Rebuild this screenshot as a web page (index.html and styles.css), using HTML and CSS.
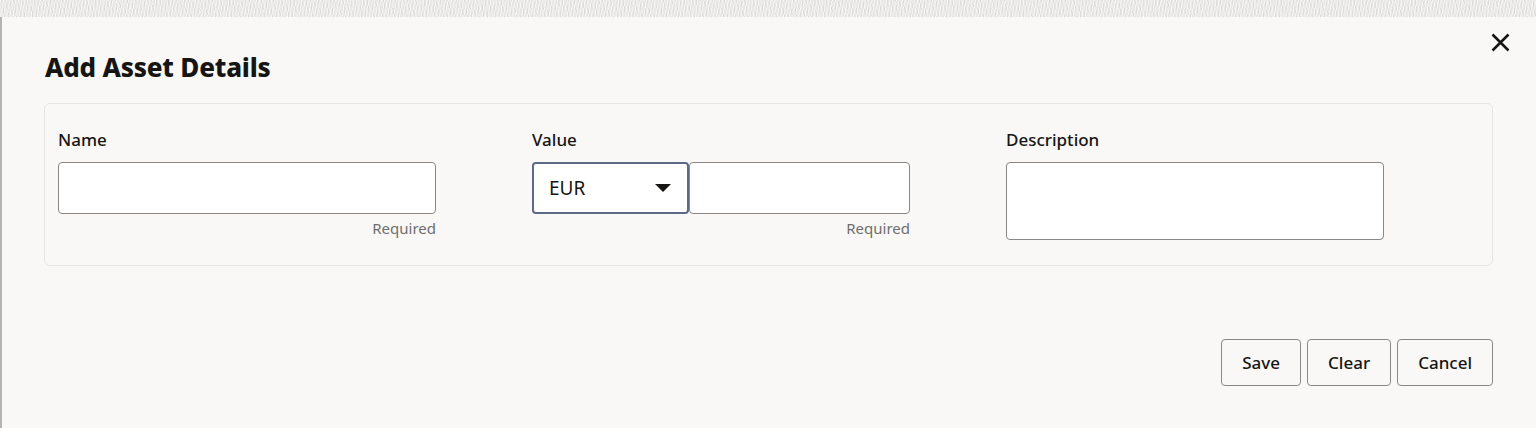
FILE: index.html
```html
<!DOCTYPE html>
<html lang="en">
<head>
<meta charset="utf-8">
<title>Add Asset Details</title>
<link rel="stylesheet" href="styles.css">
</head>
<body>
<div class="backdrop"></div>
<div class="dialog">
  <button class="close" aria-label="Close">
    <svg width="19" height="19" viewBox="0 0 19 19"><path d="M1.5 1.5 L17.5 17.5 M17.5 1.5 L1.5 17.5" stroke="#161513" stroke-width="2.5" fill="none"/></svg>
  </button>
  <h1 class="title">Add Asset Details</h1>
  <div class="card">
    <div class="field">
      <label class="label">Name</label>
      <div class="input name-input"></div>
      <div class="help">Required</div>
    </div>
    <div class="field">
      <label class="label">Value</label>
      <div class="combo">
        <div class="select"><span>EUR</span><svg class="caret" width="16" height="8" viewBox="0 0 16 8"><path d="M0 0 H16 L8 8 Z" fill="#161513"/></svg></div>
        <div class="input amount"></div>
      </div>
      <div class="help">Required</div>
    </div>
    <div class="field">
      <label class="label">Description</label>
      <div class="input textarea"></div>
    </div>
  </div>
  <div class="footer">
    <button class="btn">Save</button>
    <button class="btn">Clear</button>
    <button class="btn">Cancel</button>
  </div>
</div>
</body>
</html>
```
FILE: styles.css
```css
html, body {
  margin: 0;
  padding: 0;
  width: 1536px;
  height: 428px;
  overflow: hidden;
  background: #e6e5e3;
  font-family: "Noto Sans", "Open Sans", sans-serif;
  color: #161513;
}
.backdrop {
  height: 17px;
  background-color: #e9e8e6;
  background-image:
    repeating-linear-gradient(100deg, rgba(255,255,255,0.55) 0 1px, transparent 1px 3px),
    repeating-linear-gradient(80deg, rgba(200,200,200,0.35) 0 1px, transparent 1px 4px);
}
.dialog {
  position: relative;
  box-sizing: border-box;
  height: 411px;
  background: #f9f8f6;
  border-left: 2px solid #b5b4b2;
  padding: 0 43px 0 42px;
  display: flex;
  flex-direction: column;
}
.close {
  position: absolute;
  top: 15px;
  right: 25px;
  width: 21px;
  height: 21px;
  padding: 1px;
  border: 0;
  background: transparent;
  display: flex;
  align-items: center;
  justify-content: center;
}
.title {
  margin: 35px 0 0 1px;
  font-size: 26px;
  line-height: 30px;
  font-weight: 800;
  letter-spacing: -0.2px;
}
.card {
  margin-top: 21px;
  height: 163px;
  box-sizing: border-box;
  border: 1px solid #e8e6e3;
  border-radius: 6px;
  padding: 25px 13px 0 13px;
  display: grid;
  grid-template-columns: 378px 378px 378px;
  column-gap: 96px;
}
.field {
  display: flex;
  flex-direction: column;
}
.label {
  font-size: 17px;
  font-weight: 500;
  line-height: 22px;
  margin-bottom: 11px;
}
.input {
  box-sizing: border-box;
  background: #fff;
  border: 1px solid #8a8886;
  border-radius: 4px;
  height: 52px;
}
.textarea {
  height: 78px;
}
.help {
  text-align: right;
  font-size: 15px;
  line-height: 20px;
  color: #6f6e6c;
  margin-top: 4px;
}
.combo {
  display: flex;
}
.select {
  box-sizing: border-box;
  width: 157px;
  height: 52px;
  background: #fff;
  border: 2px solid #5f6887;
  border-radius: 4px;
  display: flex;
  align-items: center;
  justify-content: space-between;
  padding: 0 16px 0 15px;
  font-size: 19px;
}
.caret {
  display: block;
}
.amount {
  width: 221px;
}
.footer {
  margin-top: 73px;
  display: flex;
  justify-content: flex-end;
  gap: 6px;
}
.btn {
  box-sizing: border-box;
  height: 47px;
  padding: 0 20px;
  background: transparent;
  border: 1px solid #8a8886;
  border-radius: 4px;
  font-family: "Noto Sans", "Open Sans", sans-serif;
  font-size: 17px;
  font-weight: 500;
  color: #161513;
}
```
